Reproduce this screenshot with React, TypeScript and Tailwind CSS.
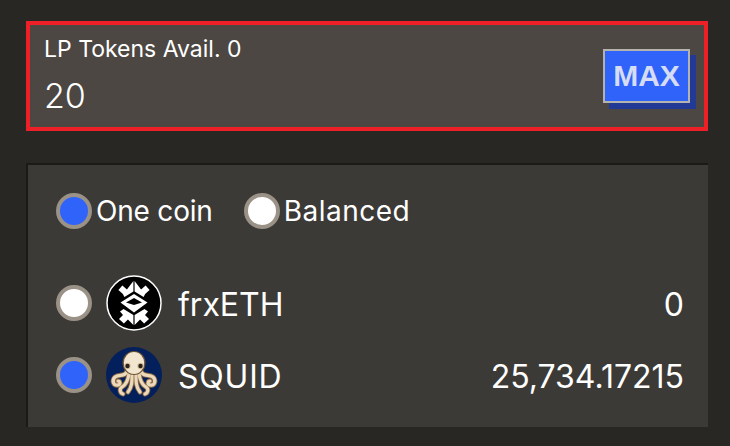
const font = "font-['Inter','Noto_Sans',sans-serif]";

function Radio({ on }: { on: boolean }) {
  return (
    <span
      className={`block h-9 w-9 shrink-0 rounded-full border-4 border-[#9a9187] ${
        on ? "bg-[#3063fa]" : "bg-white"
      }`}
    />
  );
}

function FrxIcon() {
  return (
    <svg viewBox="0 0 56 56" className="h-14 w-14 shrink-0">
      <circle cx="28" cy="28" r="27" fill="#000" stroke="#fff" strokeWidth="1.5" />
      <path d="M27.4 6v10.5l-9 5.5-1.5-3-4.5-4 4-4.5 4.5 4z" fill="#fff" />
      <path d="M28.6 6v10.5l9 5.5 1.5-3 4.500-4-4-4.500-4.500 4z" fill="#fff" />
      <path d="M14.500 27.500l13.500-8.500 13.500 8.500-13.500 10z" fill="#fff" />
      <path d="M20 27.500l8-4.500 8 4.500-8 2.500z" fill="#000" />
      <path d="M27.400 40v10l-5.500-5.500-4 4-4.900-4.500 4-4-3-3.500 3.500-2.500z" fill="#fff" />
      <path d="M28.600 40v10l5.500-5.500 4 4 4.900-4.500-4-4 3-3.500-3.500-2.500z" fill="#fff" />
    </svg>
  );
}

function SquidIcon() {
  const arms = [
    "M21 24c-1 6-8 3-12 6-4 4-1 9 3 8 3-1 2-4 0-4",
    "M35 24c1 6 8 3 12 6 4 4 1 9-3 8-3-1-2-4 0-4",
    "M23 27c-1 6-3 11-7 13-3 2-2 6 1 7",
    "M33 27c1 6 3 11 7 13 3 2 2 6-1 7",
    "M26 28c0 7 0 12-4 17",
    "M30 28c0 7 0 12 4 17",
  ];
  return (
    <svg viewBox="0 0 56 56" className="h-14 w-14 shrink-0">
      <circle cx="28" cy="28" r="28" fill="#04205c" />
      <g fill="none" strokeLinecap="round">
        {arms.map((d) => (
          <path key={d} d={d} stroke="#8a6a45" strokeWidth="5" />
        ))}
        {arms.map((d) => (
          <path key={d} d={d} stroke="#ecd9bb" strokeWidth="3.2" />
        ))}
      </g>
      <ellipse cx="28" cy="16" rx="11.5" ry="12" fill="#6d5336" />
      <ellipse cx="28" cy="16" rx="10.2" ry="11" fill="#f3e6d0" />
      <circle cx="21.5" cy="19" r="3.2" fill="#d8c09a" />
      <circle cx="34.5" cy="19" r="3.2" fill="#d8c09a" />
      <circle cx="21.5" cy="19" r="2.2" fill="#2a221c" />
      <circle cx="34.5" cy="19" r="2.2" fill="#2a221c" />
    </svg>
  );
}

export default function App() {
  return (
    <div className={`flex h-[446px] w-[730px] flex-col bg-[#282723] pt-[21px] pr-[22px] pl-[26px] text-white ${font}`}>
      <div className="flex h-[110px] items-center justify-between border-4 border-[#ed2027] bg-[#4c4742] pr-[14px] pl-[14px]">
        <div className="flex flex-col">
          <span className="text-[23px] leading-6">LP Tokens Avail. 0</span>
          <span className="mt-[15px] text-[34px] leading-10 font-light">20</span>
        </div>
        <button className="flex h-[54px] w-[87px] items-center justify-center border-2 border-[#b5b3ad] bg-[#3063fa] pb-px font-['Liberation_Sans',sans-serif] text-[30px] font-bold text-[#d5dcf3] shadow-[6px_6px_0_#223a96]">
          MAX
        </button>
      </div>

      <div className="mt-8 flex h-[264px] flex-col border-t-2 border-l-2 border-[#1b1a17] bg-[#3c3a36] pt-7 pr-[24px] pl-7">
        <div className="flex items-center">
          <Radio on />
          <span className="ml-[4px] text-[28px] leading-9 tracking-[-0.2px]">One coin</span>
          <span className="ml-[31px]">
            <Radio on={false} />
          </span>
          <span className="ml-[4px] text-[28px] leading-9 tracking-[0.5px]">Balanced</span>
        </div>

        <div className="mt-[46px] flex h-14 items-center">
          <Radio on={false} />
          <span className="ml-3.5">
            <FrxIcon />
          </span>
          <span className="ml-4 pt-1 text-[32px]">frxETH</span>
          <span className="ml-auto pt-1 text-[32px]">0</span>
        </div>
        <div className="mt-4 flex h-14 items-center">
          <Radio on />
          <span className="ml-3.5">
            <SquidIcon />
          </span>
          <span className="ml-4 pt-1 text-[32px] tracking-[0.8px]">SQUID</span>
          <span className="ml-auto pt-1 text-[32px]">25,734.17215</span>
        </div>
      </div>
    </div>
  );
}
